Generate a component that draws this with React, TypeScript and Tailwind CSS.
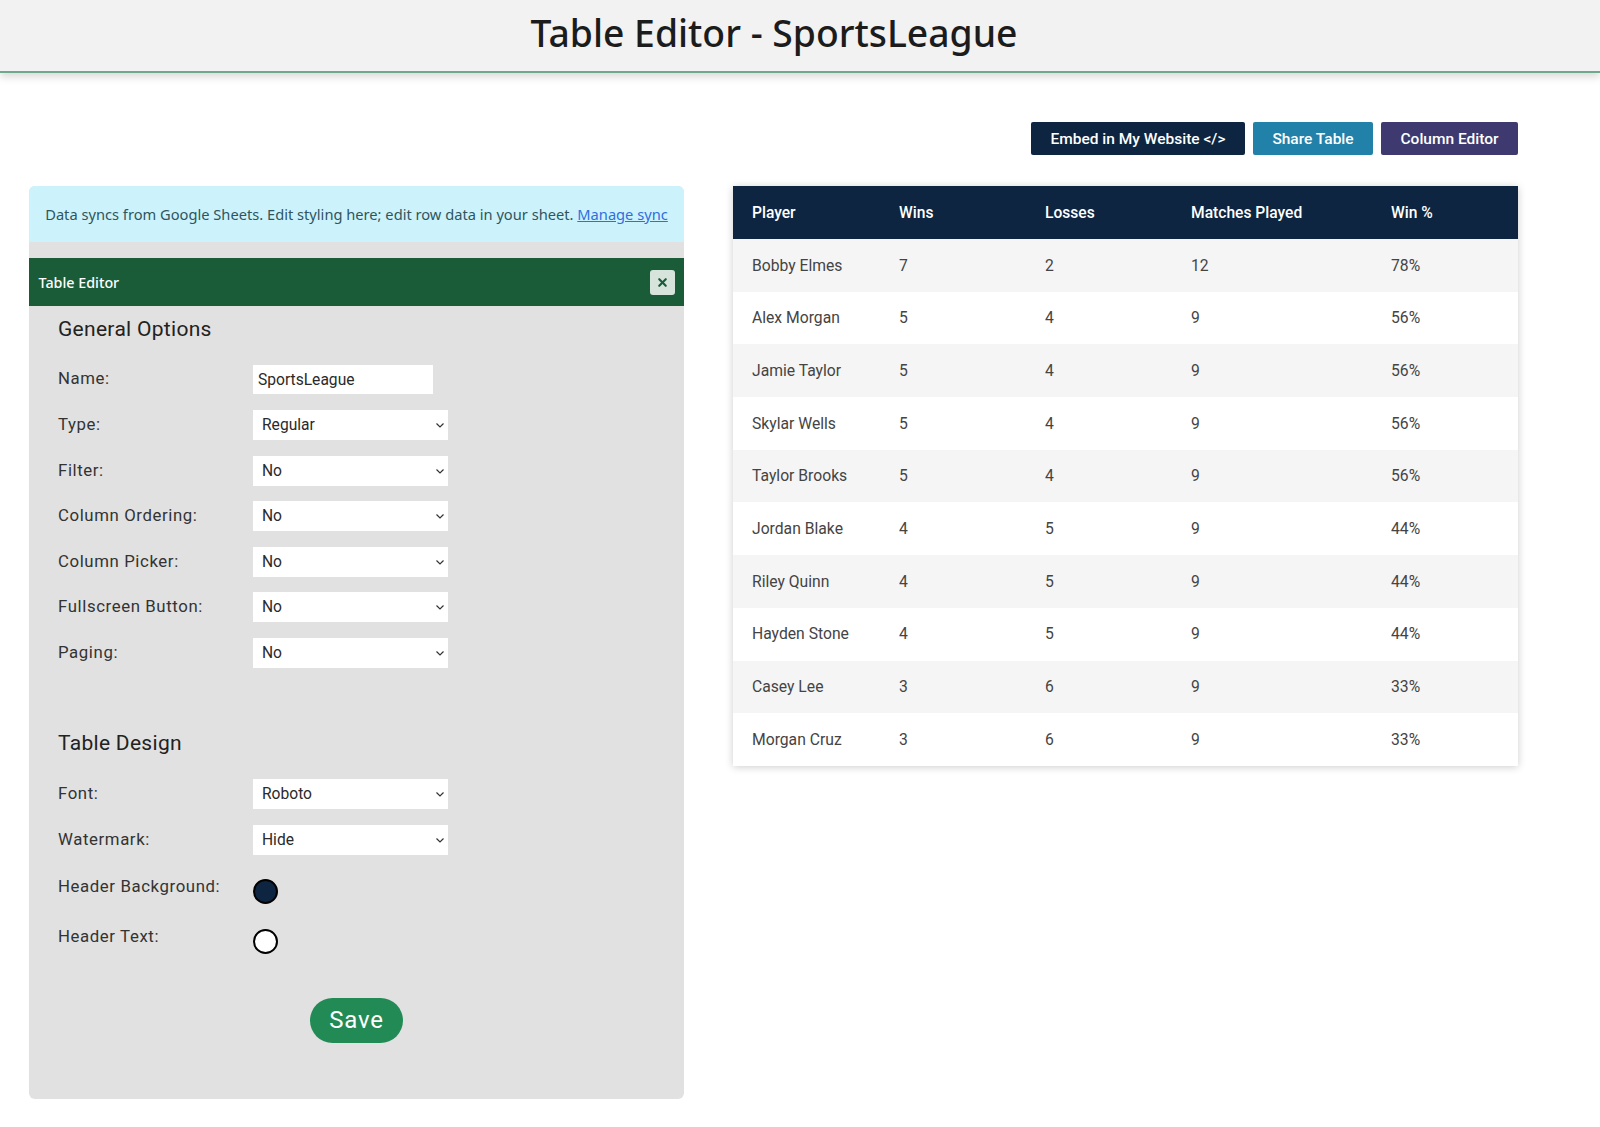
import { ReactElement } from 'react';
import { X } from 'lucide-react';

const rows = [
  ['Bobby Elmes', '7', '2', '12', '78%'],
  ['Alex Morgan', '5', '4', '9', '56%'],
  ['Jamie Taylor', '5', '4', '9', '56%'],
  ['Skylar Wells', '5', '4', '9', '56%'],
  ['Taylor Brooks', '5', '4', '9', '56%'],
  ['Jordan Blake', '4', '5', '9', '44%'],
  ['Riley Quinn', '4', '5', '9', '44%'],
  ['Hayden Stone', '4', '5', '9', '44%'],
  ['Casey Lee', '3', '6', '9', '33%'],
  ['Morgan Cruz', '3', '6', '9', '33%'],
];

const generalOptions = [
  ['Type:', 'Regular'],
  ['Filter:', 'No'],
  ['Column Ordering:', 'No'],
  ['Column Picker:', 'No'],
  ['Fullscreen Button:', 'No'],
  ['Paging:', 'No'],
];

function Label({ children }: { children: string }): ReactElement {
  return <label className="w-[195px] shrink-0 text-[16.8px] tracking-[0.6px] text-[#333]">{children}</label>;
}

function SelectRow({ label, value }: { label: string; value: string }): ReactElement {
  return (
    <div className="flex h-[30px] items-center">
      <Label>{label}</Label>
      <div className="relative h-[30px] w-[195px]">
        <select
          defaultValue={value}
          className="h-full w-full appearance-none border-0 bg-white pl-[9px] pt-[2px] text-[15.6px] text-[#2a2a2a] outline-none"
        >
          <option>{value}</option>
        </select>
        <svg
          viewBox="0 0 8 5"
          className="pointer-events-none absolute right-[4px] top-[13px] h-[5px] w-[8px]"
          fill="none"
          stroke="#333"
          strokeWidth="1.2"
        >
          <path d="M0.5 0.5L4 4L7.5 0.5" />
        </svg>
      </div>
    </div>
  );
}

function ColorRow({ label, color }: { label: string; color: string }): ReactElement {
  return (
    <div className="flex h-[25px] items-start">
      <label className="-mt-[5px] w-[195px] shrink-0 text-[16.8px] tracking-[0.6px] text-[#333]">{label}</label>
      <span className={`h-[25px] w-[25px] rounded-full border-2 border-black ${color}`} />
    </div>
  );
}

export default function App(): ReactElement {
  return (
    <div className="min-h-[1127px] bg-white font-['Roboto',sans-serif]">
      <header className="flex h-[73px] items-center justify-center border-b-2 border-[#6fa88c] bg-[#f2f2f2] pb-[6px] pr-[52px] shadow-[0_4px_8px_rgba(0,0,0,0.15)]">
        <h1 className="font-['Noto_Sans',sans-serif] text-[37.3px] font-medium text-[#1c1c1c]">
          Table Editor - SportsLeague
        </h1>
      </header>

      <div className="mt-[49px] flex h-[33px] justify-end gap-[8px] pr-[82px] text-[15.5px] font-medium text-white">
        <button className="w-[214px] rounded-[2px] bg-[#0d2540] pt-[2px]">Embed in My Website &lt;/&gt;</button>
        <button className="w-[120px] rounded-[2px] bg-[#2281a8] pt-[2px]">Share Table</button>
        <button className="w-[137px] rounded-[2px] bg-[#3e3a70] pt-[2px]">Column Editor</button>
      </div>

      <div className="mt-[31px] flex items-start">
        <aside className="ml-[29px] h-[913px] w-[655px] rounded-[6px] bg-[#e1e1e1]">
          <div className="flex h-[56px] items-center justify-center rounded-t-[6px] bg-[#ccf3fb] pt-[2px] font-['Noto_Sans',sans-serif] text-[14.66px] text-[#2f5560]">
            <span>
              Data syncs from Google Sheets. Edit styling here; edit row data in your sheet.{' '}
              <a className="text-[#2f6fe0] underline">Manage sync</a>
            </span>
          </div>

          <div className="mt-[16px] flex h-[48px] items-center justify-between bg-[#1a5c38] pl-[9.5px] pr-[9px] font-['Noto_Sans',sans-serif] text-[14.3px] font-medium text-white">
            <span className="pt-[2px]">Table Editor</span>
            <button className="flex h-[25px] w-[25px] items-center justify-center rounded-[3px] bg-[#d6e4dc] text-[#1a5c38]">
              <X size={13} strokeWidth={4} />
            </button>
          </div>

          <div className="pl-[29px]">
            <h2 className="mt-[8px] text-[21px] tracking-[0.3px] text-[#222]">General Options</h2>

            <div className="mt-[19px] flex h-[29px] items-center">
              <Label>Name:</Label>
              <input
                readOnly
                value="SportsLeague"
                className="h-[29px] w-[180px] bg-white pl-[5px] pt-[2px] text-[15.6px] text-[#2a2a2a] outline-none"
              />
            </div>

            <div className="mt-[16.5px] flex flex-col gap-[15.5px]">
              {generalOptions.map(([label, value]) => (
                <SelectRow key={label} label={label} value={value} />
              ))}
            </div>

            <h2 className="mt-[60px] text-[21px] tracking-[0.3px] text-[#222]">Table Design</h2>

            <div className="mt-[19.5px] flex flex-col gap-[16px]">
              <SelectRow label="Font:" value="Roboto" />
              <SelectRow label="Watermark:" value="Hide" />
            </div>

            <div className="mt-[24.5px] flex flex-col gap-[25px]">
              <ColorRow label="Header Background:" color="bg-[#0d2540]" />
              <ColorRow label="Header Text:" color="bg-white" />
            </div>
          </div>

          <div className="mt-[43.5px] flex justify-center">
            <button className="h-[45px] w-[93px] rounded-[23px] bg-[#228b55] text-[24px] tracking-[0.8px] text-white">
              Save
            </button>
          </div>
        </aside>

        <div className="ml-[49px] w-[785px] shadow-[0_1px_8px_rgba(0,0,0,0.2)]">
          <table className="w-full table-fixed border-collapse text-[15.7px]">
            <colgroup>
              <col className="w-[146px]" />
              <col className="w-[146px]" />
              <col className="w-[146px]" />
              <col className="w-[200px]" />
              <col className="w-[147px]" />
            </colgroup>
            <thead>
              <tr className="h-[53px] bg-[#0d2540] text-left text-[15.6px] text-white">
                {['Player', 'Wins', 'Losses', 'Matches Played', 'Win %'].map((name) => (
                  <th key={name} className="pl-[20px] pt-[2px] font-medium first:pl-[19px]">
                    {name}
                  </th>
                ))}
              </tr>
            </thead>
            <tbody>
              {rows.map((row, i) => (
                <tr key={row[0]} className={`h-[52.7px] text-[#444] ${i % 2 === 0 ? 'bg-[#f5f5f5]' : 'bg-white'}`}>
                  {row.map((cell, j) => (
                    <td key={j} className="pl-[20px] first:pl-[19px]">
                      {cell}
                    </td>
                  ))}
                </tr>
              ))}
            </tbody>
          </table>
        </div>
      </div>
    </div>
  );
}
